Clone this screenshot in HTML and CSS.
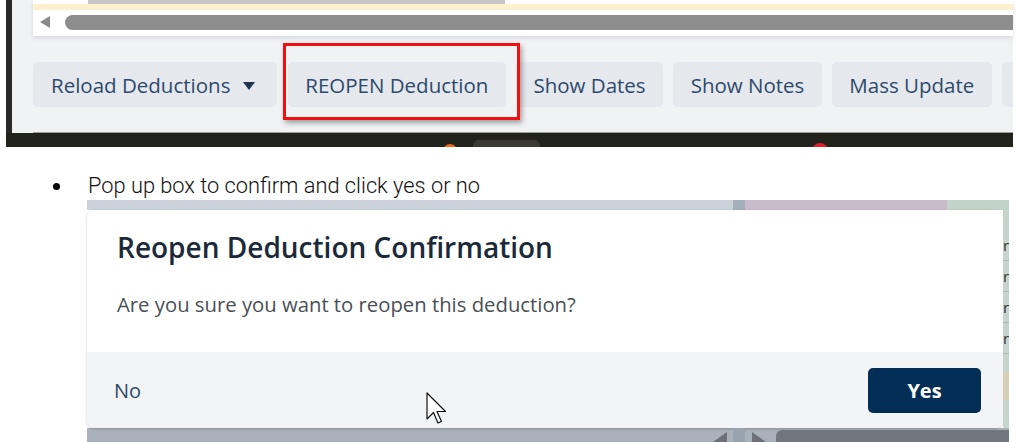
FILE: index.html
```html
<!DOCTYPE html>
<html lang="en">
  <head>
    <meta charset="UTF-8" />
    <title>Reopen Deduction</title>
    <link rel="stylesheet" href="styles.css">
  </head>
  <body>
    <div class="shot shot-toolbar">
      <div class="shot-main">
        <div class="grid-panel">
          <div class="grid-top"><span class="grid-header"></span></div>
          <div class="hscroll">
            <span class="hscroll-arrow"></span>
            <span class="hscroll-thumb"></span>
          </div>
        </div>
        <div class="toolbar">
          <button class="tb-btn">Reload Deductions <span class="caret"></span></button>
          <button class="tb-btn">REOPEN Deduction</button>
          <button class="tb-btn">Show Dates</button>
          <button class="tb-btn">Show Notes</button>
          <button class="tb-btn">Mass Update</button>
          <button class="tb-btn tb-more"></button>
          <div class="highlight"></div>
        </div>
      </div>
      <div class="taskbar">
        <span class="tray-dot orange"></span>
        <span class="tray-pill"></span>
        <span class="tray-dot red"></span>
      </div>
    </div>

    <ul class="notes">
      <li>Pop up box to confirm and click yes or no</li>
    </ul>

    <div class="shot shot-dialog">
      <div class="backdrop-top">
        <span class="bd-grey"></span>
        <span class="bd-split"></span>
        <span class="bd-pink"></span>
        <span class="bd-green"></span>
      </div>
      <div class="dialog-row">
        <div class="dialog">
          <h2 class="dialog-title">Reopen Deduction Confirmation</h2>
          <p class="dialog-text">Are you sure you want to reopen this deduction?</p>
          <div class="dialog-footer">
            <button class="btn-no">No</button>
            <button class="btn-yes">Yes</button>
            <svg class="cursor" width="22" height="34" viewBox="0 0 22 34">
              <path d="M1 1 L1 27 L7.5 20.5 L12 31 L15.5 29.5 L11 19.5 L19.5 19.5 Z" fill="#fff" stroke="#111" stroke-width="1.2" stroke-linejoin="round"/>
            </svg>
          </div>
        </div>
        <div class="backdrop-side">
          <span>r</span><span>r</span><span>r</span><span>r</span>
          <i class="side-beige"></i>
        </div>
      </div>
      <div class="backdrop-bottom">
        <span class="bb-wedge"></span>
        <span class="bb-split"></span>
        <span class="bb-wedge flip"></span>
        <span class="bb-bar"></span>
      </div>
    </div>
  </body>
</html>
```

FILE: styles.css
```css
body {
  margin: 0;
  background: #fff;
  font-family: "Open Sans", "Liberation Sans", sans-serif;
}

/* ---- top screenshot: toolbar ---- */
.shot-toolbar {
  margin-left: 6px;
  width: 1007px;
}
.shot-main {
  border-left: 6px solid #2a2a2a;
  background: #f1f2f4;
  padding-left: 21px;
}
.grid-panel {
  background: #fff;
  height: 36px;
  box-shadow: 0 2px 4px rgba(60, 70, 90, 0.15);
}
.grid-top {
  height: 10px;
  background: linear-gradient(#fff 0 4px, #fdf0cf 4px 10px);
}
.grid-header {
  display: block;
  margin-left: 55px;
  width: 417px;
  height: 4px;
  background: #c6c6c8;
}
.hscroll {
  display: flex;
  align-items: center;
  height: 24px;
  padding-left: 7px;
  gap: 15px;
}
.hscroll-arrow {
  width: 0;
  height: 0;
  border-top: 6px solid transparent;
  border-bottom: 6px solid transparent;
  border-right: 10px solid #8a8a8a;
}
.hscroll-thumb {
  flex: 1;
  height: 15px;
  border-radius: 8px 0 0 8px;
  background: #8d8d8d;
}
.toolbar {
  position: relative;
  display: flex;
  gap: 10px;
  padding: 26px 0 25px;
  border-bottom: 1px solid #9c9c9c;
  overflow: hidden;
}
.tb-btn {
  flex: none;
  height: 45px;
  padding: 0 17.5px;
  border: none;
  border-radius: 5px;
  background: #e5e8ed;
  color: #2d4a6c;
  font-family: "Open Sans", "Liberation Sans", sans-serif;
  font-size: 20.5px;
  white-space: nowrap;
}
.tb-btn:first-child {
  padding: 0 22px 0 18px;
  margin-right: 1px;
}
.tb-more {
  width: 40px;
}
.caret {
  display: inline-block;
  margin-left: 7px;
  vertical-align: 3px;
  border-left: 6px solid transparent;
  border-right: 6px solid transparent;
  border-top: 8px solid #1f3550;
}
.highlight {
  position: absolute;
  left: 250px;
  top: 7px;
  width: 231px;
  height: 71px;
  border: 3px solid #f01010;
  box-shadow: 2px 3px 5px rgba(0, 0, 0, 0.35);
}
.taskbar {
  position: relative;
  height: 14px;
  background: #22231b;
  overflow: hidden;
}
.tray-dot {
  position: absolute;
  border-radius: 50%;
}
.tray-dot.orange {
  left: 437px;
  top: 11px;
  width: 14px;
  height: 14px;
  background: #f06a1c;
}
.tray-dot.red {
  left: 806px;
  top: 10px;
  width: 16px;
  height: 16px;
  background: #e0202a;
}
.tray-pill {
  position: absolute;
  left: 467px;
  top: 7px;
  width: 67px;
  height: 20px;
  border-radius: 6px;
  background: #3a3a33;
}

/* ---- bullet line ---- */
.notes {
  margin: 26px 0 1px;
  padding-left: 88px;
  list-style: none;
}
.notes li {
  position: relative;
  font-family: Roboto, "Liberation Sans", sans-serif;
  font-weight: 300;
  font-size: 21.8px;
  line-height: 26px;
  color: #111;
}
.notes li::before {
  content: "";
  position: absolute;
  left: -35px;
  top: 10px;
  width: 7px;
  height: 7px;
  border-radius: 50%;
  background: #000;
}

/* ---- bottom screenshot: dialog ---- */
.shot-dialog {
  margin-left: 87px;
  width: 922px;
}
.backdrop-top {
  display: flex;
  height: 10px;
}
.bd-grey { width: 646px; background: #cbd2da; }
.bd-split { width: 12px; background: #a4afbb; }
.bd-pink { width: 202px; background: #c8bcca; }
.bd-green { flex: 1; background: #c2d3ca; }
.dialog-row {
  display: flex;
  height: 218px;
}
.dialog {
  width: 916px;
  background: #fff;
  border-radius: 8px;
  overflow: hidden;
  box-shadow: 0 1px 3px rgba(0, 0, 0, 0.2);
  display: flex;
  flex-direction: column;
}
.dialog-title {
  margin: 20px 0 0 30px;
  font-size: 28px;
  font-weight: 600;
  line-height: 34px;
  color: #1b2a3a;
}
.dialog-text {
  margin: 26px 0 0 30px;
  font-size: 20.3px;
  line-height: 28px;
  color: #4a4f56;
}
.dialog-footer {
  position: relative;
  margin-top: auto;
  height: 76px;
  background: #f3f4f6;
  display: flex;
  align-items: center;
  justify-content: space-between;
  padding: 0 22px 0 27px;
}
.btn-no {
  border: none;
  background: none;
  padding: 0;
  font-family: "Open Sans", "Liberation Sans", sans-serif;
  font-size: 20px;
  color: #2d4a6c;
}
.btn-yes {
  width: 113px;
  height: 45px;
  border: none;
  border-radius: 5px;
  background: #032f57;
  color: #fff;
  font-family: "Open Sans", "Liberation Sans", sans-serif;
  font-size: 20px;
  font-weight: 700;
}
.cursor {
  position: absolute;
  left: 339px;
  top: 40px;
}
.backdrop-side {
  flex: 1;
  display: flex;
  flex-direction: column;
  background: #c5d5cd;
  font-size: 15px;
  line-height: 30px;
  color: #333;
  overflow: hidden;
  padding-top: 20px;
}
.backdrop-side span {
  height: 30px;
  border-bottom: 1px solid #a9b8b0;
}
.side-beige {
  height: 28px;
  margin-top: 18px;
  background: #d6cfb5;
}
.backdrop-bottom {
  display: flex;
  align-items: flex-end;
  height: 14px;
  background: #a9b1ba;
}
.bb-wedge {
  margin-left: 626px;
  width: 14px;
  height: 10px;
  background: #6c7178;
  clip-path: polygon(0 100%, 100% 0, 100% 100%);
}
.bb-wedge.flip {
  margin-left: 7px;
  clip-path: polygon(0 0, 100% 100%, 0 100%);
}
.bb-split {
  margin-left: 6px;
  width: 12px;
  height: 14px;
  background: #98a3af;
}
.bb-bar {
  margin-left: 10px;
  flex: 1;
  height: 12px;
  border-radius: 6px 0 0 0;
  background: #71767c;
}
```
